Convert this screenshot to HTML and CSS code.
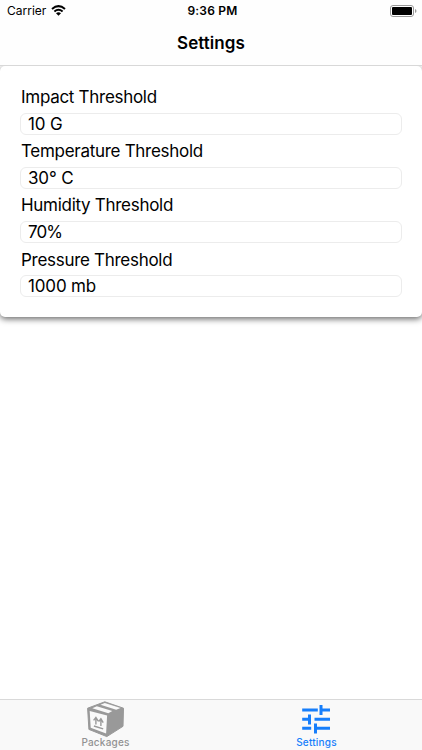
FILE: index.html
```html
<!DOCTYPE html>
<html lang="en">
<head>
<meta charset="utf-8">
<title>Settings</title>
<link rel="stylesheet" href="styles.css">
</head>
<body>
<header class="header">
  <div class="status">
    <div class="carrier"><span>Carrier</span>
      <svg width="15" height="11" viewBox="0 0 15 11"><g fill="none" stroke="#000" stroke-width="2"><path d="M1 3.9Q7.5-1.6 14 3.9"/><path d="M3.4 6.5Q7.5 3.1 11.6 6.5"/></g><path d="M5 8.2Q7.5 6.2 10 8.2L7.5 10.7Z"/></svg>
    </div>
    <span class="time">9:36 PM</span>
    <svg class="battery" width="27" height="12" viewBox="0 0 27 12"><rect x=".5" y=".5" width="23" height="11" rx="2.5" fill="#fff" stroke="#999"/><rect x="2" y="2" width="20" height="8" rx="1"/><path d="M25 4v4q1.5-.5 1.5-2T25 4Z" fill="#999"/></svg>
  </div>
  <h1 class="title"><span>Settings</span></h1>
</header>
<main class="content">
  <form class="card">
    <label class="field"><span class="label">Impact Threshold</span><span class="input">10 G</span></label>
    <label class="field"><span class="label">Temperature Threshold</span><span class="input">30° C</span></label>
    <label class="field"><span class="label">Humidity Threshold</span><span class="input percent">70%</span></label>
    <label class="field"><span class="label">Pressure Threshold</span><span class="input">1000 mb</span></label>
  </form>
</main>
<nav class="tabs">
  <a class="tab">
    <svg width="38" height="38" viewBox="0 0 38 38"><path fill="#999" stroke="#999" stroke-linejoin="round" d="M17.8 1.8 36.5 8.2 36 26.3 19.8 36.6 1.9 29.4 .6 8.2Z"/><path fill="#f9f9f9" d="M2.7 11 20.1 15.6 19.1 33.6 3.7 27.7ZM5.3 8.2 9.8 6.3 25.3 11 21.3 13.2ZM13.5 4.7 17.8 3 33.5 8 29.2 9.8Z"/><path d="M8.9 24.5v-7.3M6.6 20.4l2.3-3 2.3 3.8M13.9 26v-7.3M11.6 21.6l2.3-2.8 2.3 3.8M6.9 26l9.3 2.9" stroke="#999" stroke-width="1.4" fill="none"/></svg>
    <span class="caption">Packages</span>
  </a>
  <a class="tab active">
    <svg width="38" height="38" viewBox="0 0 38 38"><path fill="none" stroke="#167efb" stroke-width="3" d="M4.2 10h15.6M23 5v10M23 10h9M4.2 19.2h8M11.5 14.5v10M16.5 19.2h15.5M4.2 28.3h9M17.5 23.5v10M17.5 28.3h14.5"/></svg>
    <span class="caption">Settings</span>
  </a>
</nav>
</body>
</html>
```
FILE: styles.css
```css
* { box-sizing: border-box; }
body { margin: 0; height: 750px; display: flex; flex-direction: column; overflow: hidden; background: #fff; color: #000; font-family: Inter, sans-serif; }
.header { height: 66px; border-bottom: 1px solid #d8d8d8; background: #fefefe; }
.status { height: 21px; display: grid; grid-template-columns: 1fr auto 1fr; align-items: center; padding: 0 5px 0 7px; font-size: 12px; }
.carrier { display: flex; align-items: center; gap: 5px; }
.time { font-weight: 600; letter-spacing: .2px; padding-left: 1px; }
.battery { justify-self: end; }
.title { margin: 0; height: 44px; display: flex; align-items: center; justify-content: center; font-size: 17px; font-weight: 600; letter-spacing: .05px; }
.content { flex: 1; }
.card { height: 251px; padding: 14px 20px 0; border-radius: 5px; background: #fff; box-shadow: 0 2px 6px rgba(0,0,0,.6); clip-path: inset(0 0 -20px 0); }
.field { display: block; height: 54.3px; font-size: 17px; }
.label { display: flex; align-items: center; height: 32.5px; padding: 1px 0 0 1px; white-space: nowrap; letter-spacing: -.29px; }
.input { display: flex; align-items: center; height: 22px; padding-left: 7px; border: 1px solid #ececec; border-radius: 6px; letter-spacing: -.15px; }
.percent { letter-spacing: -.9px; }
.tabs { height: 51px; display: flex; border-top: 1px solid #d9d9d9; background: #f9f9f9; }
.tab { flex: 1; display: flex; flex-direction: column; align-items: center; color: #929292; font-size: 10px; font-weight: 500; line-height: 12px; }
.tab svg { flex: none; }
.caption { margin-top: -2px; letter-spacing: .2px; }
.active { color: #167efb; }
```
